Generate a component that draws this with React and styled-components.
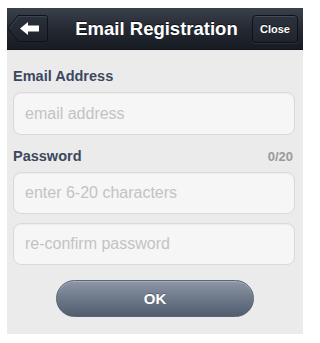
import React from "react";
import styled, { createGlobalStyle } from "styled-components";

const Global = createGlobalStyle`
  html, body {
    margin: 0;
    padding: 0;
    background: #ffffff;
  }
  body {
    font-family: "Liberation Sans", Arial, sans-serif;
  }
`;

export default function App() {
  return (
    <>
      <Global />
      <Page>
        <Screen>
          <NavBar>
            <BackButton aria-label="Back">
              <svg width="42" height="29" viewBox="0 0 42 29">
                <defs>
                  <linearGradient id="backFill" x1="0" y1="0" x2="0" y2="1">
                    <stop offset="0" stopColor="#2b313c" />
                    <stop offset="1" stopColor="#1d222a" />
                  </linearGradient>
                </defs>
                <path
                  d="M1 14.5 L11 1.5 H38 Q40.5 1.5 40.5 4 V25 Q40.5 27.5 38 27.5 H11 Z"
                  fill="url(#backFill)"
                  stroke="#0f1318"
                  strokeWidth="1"
                />
                <path
                  d="M2.4 14.5 L11.5 2.6 H38 Q39.5 2.6 39.5 4"
                  fill="none"
                  stroke="#454c58"
                  strokeWidth="0.8"
                />
                <path d="M13 14.5 L21 8 V11.5 H32 V17.5 H21 V21 Z" fill="#ffffff" />
              </svg>
            </BackButton>
            <Title>Email Registration</Title>
            <CloseButton>Close</CloseButton>
          </NavBar>

          <Form>
            <LabelRow>
              <Label>Email Address</Label>
            </LabelRow>
            <Field placeholder="email address" $tall />

            <LabelRow $spaced>
              <Label>Password</Label>
              <Counter>0/20</Counter>
            </LabelRow>
            <Field placeholder="enter 6-20 characters" type="password" />
            <Field placeholder="re-confirm password" type="password" $next />

            <OkButton>OK</OkButton>
          </Form>
        </Screen>
      </Page>
    </>
  );
}

const Page = styled.div`
  padding: 8px 7px 9px 7px;
  width: 310px;
  height: 343px;
  box-sizing: border-box;
`;

const Screen = styled.div`
  width: 296px;
  height: 326px;
  background: #ebebeb;
  display: flex;
  flex-direction: column;
`;

const NavBar = styled.div`
  height: 42px;
  flex: none;
  display: flex;
  align-items: center;
  justify-content: space-between;
  padding: 0 5px 0 0;
  background: linear-gradient(to bottom, #3b414c 0%, #262b34 45%, #171b22 100%);
  border-bottom: 1px solid #10141a;
  box-sizing: border-box;
`;

const BackButton = styled.div`
  width: 42px;
  height: 29px;
  display: flex;
`;

const Title = styled.div`
  color: #ffffff;
  font-size: 18.5px;
  font-weight: bold;
  margin-left: 12px;
  text-shadow: 0 -1px 0 rgba(0, 0, 0, 0.6);
`;

const CloseButton = styled.div`
  width: 46px;
  height: 28px;
  box-sizing: border-box;
  display: flex;
  align-items: center;
  justify-content: center;
  color: #ffffff;
  font-size: 11px;
  font-weight: bold;
  border-radius: 4px;
  border: 1px solid #0e1217;
  background: linear-gradient(to bottom, #2d333d 0%, #1f242c 100%);
  box-shadow: inset 0 1px 0 rgba(255, 255, 255, 0.12), 0 1px 0 rgba(255, 255, 255, 0.08);
  text-shadow: 0 -1px 0 rgba(0, 0, 0, 0.6);
`;

const Form = styled.div`
  flex: 1;
  display: flex;
  flex-direction: column;
  padding: 18px 8px 0 6px;
`;

const LabelRow = styled.div`
  display: flex;
  justify-content: space-between;
  align-items: baseline;
  height: 16px;
  line-height: 16px;
  margin-top: ${(p) => (p.$spaced ? "13px" : "0")};
  margin-bottom: 8px;
`;

const Label = styled.span`
  font-size: 14.5px;
  font-weight: bold;
  color: #3d4760;
`;

const Counter = styled.span`
  font-size: 13px;
  font-weight: bold;
  color: #9a9a9a;
  margin-right: 2px;
`;

const Field = styled.input`
  height: ${(p) => (p.$tall ? "43px" : "42px")};
  box-sizing: border-box;
  width: 100%;
  margin-top: ${(p) => (p.$next ? "9px" : "0")};
  border: 1px solid #d9d9d9;
  border-radius: 8px;
  background: #f6f6f6;
  box-shadow: inset 0 1px 1px rgba(0, 0, 0, 0.04);
  padding: 0 11px;
  font-family: "Liberation Sans", Arial, sans-serif;
  font-size: 16px;
  color: #333;
  outline: none;

  &::placeholder {
    color: #c3c3c3;
  }
`;

const OkButton = styled.div`
  align-self: center;
  margin-top: 15px;
  margin-left: 2px;
  width: 198px;
  height: 37px;
  border-radius: 19px;
  display: flex;
  align-items: center;
  justify-content: center;
  color: #ffffff;
  font-size: 15px;
  font-weight: bold;
  background: linear-gradient(to bottom, #8c96a6 0%, #6d7889 50%, #525d70 100%);
  border: 1px solid #5a6474;
  box-sizing: border-box;
  box-shadow: inset 0 1px 0 rgba(255, 255, 255, 0.25);
  text-shadow: 0 -1px 0 rgba(0, 0, 0, 0.25);
`;
